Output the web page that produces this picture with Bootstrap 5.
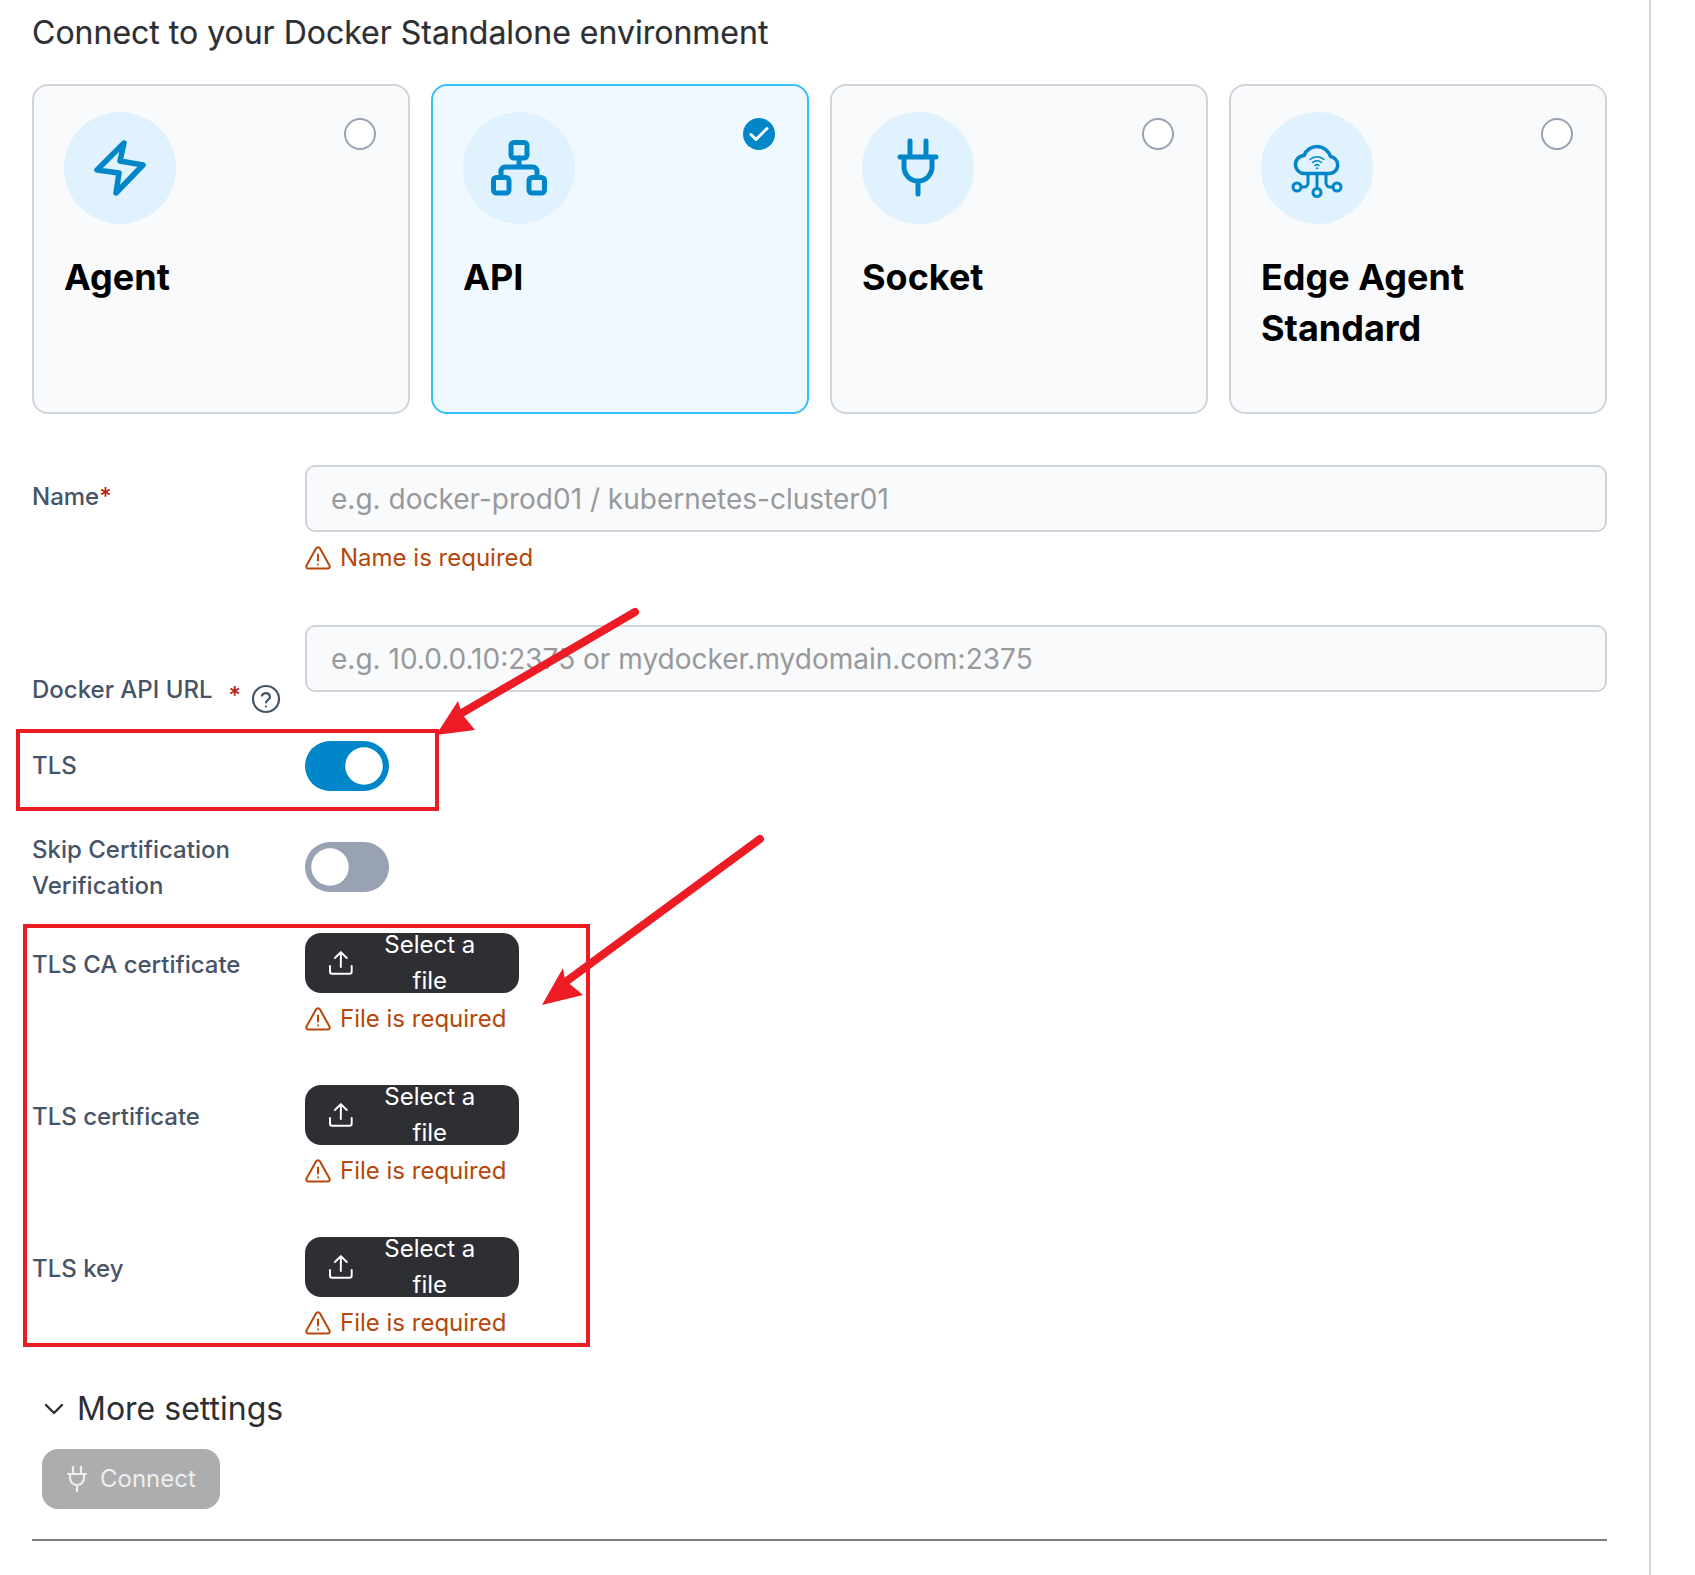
<!DOCTYPE html>
<html lang="en">
<head>
<meta charset="utf-8">
<title>Connect</title>
<link href="https://cdn.jsdelivr.net/npm/bootstrap@5.3.0/dist/css/bootstrap.min.css" rel="stylesheet">
<style>
html,body{height:1575px;overflow:hidden;background:#fff}
body{font-family:Inter,"Liberation Sans",sans-serif;font-size:24px;line-height:36px;color:#344054}
.sheet{position:relative;width:1651px;height:1575px;padding:12px 42px 0 32px;border-right:2px solid #d0d5dd}
.page-title{font-size:32px;line-height:42px;font-weight:400;color:#2d2f33;margin:0 0 30px;-webkit-text-stroke:.2px #2d2f33}
.type-row{gap:21px;margin-bottom:51px}
.type-box{flex:1 1 0;height:330px;position:relative;padding:26px 30px;background:#f9fafb;border:2px solid #d0d5dd;border-radius:16px}
.type-box.picked{background:#f0f9ff;border-color:#36bffa}
.type-disc{width:112px;height:112px;background:#e0f2fe;border-radius:50%;margin-bottom:28px}
.type-disc svg{display:block}
.type-name{font-size:36px;line-height:51px;font-weight:700;color:#000}
.type-radio{position:absolute;top:32px;right:32px;width:32px;height:32px;border-radius:50%;background:#fff;border:2px solid #98a2b3}
.type-radio.on{background:#0086c9;border:0}
.type-radio svg{display:block}
.line{display:flex}
.lab{width:273px;flex:none;color:#475467;font-weight:500;padding-top:14px;padding-right:24px}
.lab-split{display:flex;align-items:center}
.lab-split>span:first-child{flex:1 1 auto}
.req{color:#b42318}
.lab-split .req{margin:0 10px 0 0;line-height:1;position:relative;top:6px;font-size:24px}
.help{width:30px;height:30px;flex:none;margin-top:18px;margin-right:0}
.fld{flex:1 1 auto;min-width:0}
.fld .form-control{height:67px;background:#f9fafb;border:2px solid #d0d5dd;border-radius:10px;font-size:28px;padding:0 24px;color:#344054}
.fld .form-control::placeholder{color:#98999b}
.err{display:flex;align-items:center;gap:9px;color:#b54708;margin-top:8px;height:36px;font-size:24px;font-weight:400}
.err svg{flex:none}
.fld .form-switch{padding:0;margin:0;min-height:0;height:50px;display:block}
.fld .form-switch .form-check-input{width:84px;height:50px;margin:0;float:none;display:block;border:0;border-radius:25px;background-color:#98a2b3;background-image:url("data:image/svg+xml,%3csvg xmlns='http://www.w3.org/2000/svg' viewBox='-4 -4 8 8'%3e%3ccircle r='3' fill='%23fff'/%3e%3c/svg%3e");box-shadow:none}
.fld .form-switch .form-check-input:checked{background-color:#0086c9}
.btn.pick{display:inline-flex;align-items:center;gap:12px;height:60px;width:214px;padding:0 24px;border-radius:16px;background:#2d2f33;border:0;color:#fff;font-size:24px;line-height:36px}
.btn.go{display:inline-flex;align-items:center;gap:12px;height:60px;width:178px;padding:0 24px;border-radius:16px;background:#acadae;border:0;color:#eeeeee;font-size:24px;opacity:1}
.more{display:flex;align-items:center;font-size:32px;line-height:42px;color:#2d2f33;padding-left:12px;gap:13px}
.rule{margin:30px 0 0;border:0;border-top:2px solid #7c7c7c;opacity:1}
.marks{position:absolute;left:0;top:0;pointer-events:none}
</style>
</head>
<body>
<div class="sheet">
  <h1 class="page-title">Connect to your Docker Standalone environment</h1>

  <div class="d-flex type-row">
    <div class="type-box">
      <div class="type-disc"><svg width="112" height="112" viewBox="0 0 112 112" fill="none" stroke="#0086c9" stroke-width="5.5" stroke-linejoin="round" stroke-linecap="round"><path d="M60 31 33 58l22 3-3 20 27-28-23-4z"/></svg></div>
      <div class="type-name">Agent</div>
      <span class="type-radio"></span>
    </div>
    <div class="type-box picked">
      <div class="type-disc"><svg width="112" height="112" viewBox="0 0 112 112" fill="none" stroke="#0086c9" stroke-width="5" stroke-linejoin="round" stroke-linecap="round"><rect x="48" y="30.5" width="16" height="15.500" rx="3"/><rect x="30.500" y="65.500" width="15.500" height="15.500" rx="3"/><rect x="66" y="65.500" width="15.500" height="15.500" rx="3"/><path d="M56 46v9M38 65v-6a4 4 0 0 1 4-4h28a4 4 0 0 1 4 4v6"/></svg></div>
      <div class="type-name">API</div>
      <span class="type-radio on"><svg width="32" height="32" viewBox="0 0 32 32" fill="none" stroke="#fff" stroke-width="3" stroke-linecap="round" stroke-linejoin="round"><path d="m8 16.500 5 5 11-11"/></svg></span>
    </div>
    <div class="type-box">
      <div class="type-disc"><svg width="112" height="112" viewBox="0 0 112 112" fill="none" stroke="#0086c9" stroke-width="5" stroke-linejoin="round" stroke-linecap="round"><path d="M48 29v15M64 29v15M38 45h36M42 46v9a14 14 0 0 0 28 0v-9M56 69v13"/></svg></div>
      <div class="type-name">Socket</div>
      <span class="type-radio"></span>
    </div>
    <div class="type-box">
      <div class="type-disc"><svg width="112" height="112" viewBox="0 0 112 112" fill="none" stroke="#0086c9" stroke-width="3.500" stroke-linejoin="round" stroke-linecap="round"><path d="M44 61.500h24a8.500 8.500 0 0 0 1.500-16.900A14 14 0 0 0 43 43.500a9 9 0 0 0 1 18z"/><path stroke-width="3" d="M56 62v14.500M47 62v9a4 4 0 0 1-4 4h-3M65 62v9a4 4 0 0 0 4 4h3"/><circle stroke-width="3" cx="56" cy="80.500" r="4"/><circle stroke-width="3" cx="36" cy="75" r="4"/><circle stroke-width="3" cx="76" cy="75" r="4"/><path stroke-width="1.500" d="M49 47.500a10 10 0 0 1 14 0M51.500 50.500a6.500 6.500 0 0 1 9 0M54 53.500a3 3 0 0 1 4 0"/><circle cx="56" cy="56.300" r=".7" stroke-width="1"/></svg></div>
      <div class="type-name">Edge Agent Standard</div>
      <span class="type-radio"></span>
    </div>
  </div>

  <form>
    <div class="line name-line">
      <label class="lab">Name<span class="req">*</span></label>
      <div class="fld">
        <input class="form-control" placeholder="e.g. docker-prod01 / kubernetes-cluster01">
        <div class="err"><svg width="26" height="24" viewBox="0 0 26 24" fill="none" stroke="#b54708" stroke-width="2" stroke-linejoin="round" stroke-linecap="round"><path d="M11 2.500 1.500 19.500a2 2 0 0 0 1.700 3h19.600a2 2 0 0 0 1.700-3L15 2.500a2.300 2.300 0 0 0-4 0zM13 8.500v6M13 18.500h.01"/></svg>Name is required</div>
      </div>
    </div>
    <div class="line url-line">
      <label class="lab lab-split"><span>Docker API URL</span><span class="req">*</span><svg class="help" viewBox="0 0 30 30" fill="none" stroke="#475467" stroke-width="2.200" stroke-linecap="round" stroke-linejoin="round"><circle cx="15" cy="15" r="13"/><path d="M11 11.500a4.200 4.200 0 0 1 8 1.400c0 2.800-4 3.600-4 5.600M15 22.500h.01"/></svg></label>
      <div class="fld"><input class="form-control" placeholder="e.g. 10.0.0.10:2375 or mydocker.mydomain.com:2375"></div>
    </div>
    <div class="line tls-line">
      <label class="lab">TLS</label>
      <div class="fld"><div class="form-check form-switch"><input class="form-check-input" type="checkbox" role="switch" checked></div></div>
    </div>
    <div class="line skip-line">
      <label class="lab">Skip Certification Verification</label>
      <div class="fld"><div class="form-check form-switch"><input class="form-check-input" type="checkbox" role="switch"></div></div>
    </div>
    <div class="line file-line">
      <label class="lab">TLS CA certificate</label>
      <div class="fld">
        <button type="button" class="btn pick"><svg width="24" height="24" viewBox="0 0 24 24" fill="none" stroke="#fff" stroke-width="2" stroke-linecap="round" stroke-linejoin="round"><path d="M1 15v6a2 2 0 0 0 2 2h18a2 2 0 0 0 2-2v-6M12 16V1M6 7l6-6 6 6"/></svg>Select a file</button>
        <div class="err"><svg width="26" height="24" viewBox="0 0 26 24" fill="none" stroke="#b54708" stroke-width="2" stroke-linejoin="round" stroke-linecap="round"><path d="M11 2.500 1.500 19.500a2 2 0 0 0 1.700 3h19.600a2 2 0 0 0 1.700-3L15 2.500a2.300 2.300 0 0 0-4 0zM13 8.500v6M13 18.500h.01"/></svg>File is required</div>
      </div>
    </div>
    <div class="line file-line">
      <label class="lab">TLS certificate</label>
      <div class="fld">
        <button type="button" class="btn pick"><svg width="24" height="24" viewBox="0 0 24 24" fill="none" stroke="#fff" stroke-width="2" stroke-linecap="round" stroke-linejoin="round"><path d="M1 15v6a2 2 0 0 0 2 2h18a2 2 0 0 0 2-2v-6M12 16V1M6 7l6-6 6 6"/></svg>Select a file</button>
        <div class="err"><svg width="26" height="24" viewBox="0 0 26 24" fill="none" stroke="#b54708" stroke-width="2" stroke-linejoin="round" stroke-linecap="round"><path d="M11 2.500 1.500 19.500a2 2 0 0 0 1.700 3h19.600a2 2 0 0 0 1.700-3L15 2.500a2.300 2.300 0 0 0-4 0zM13 8.500v6M13 18.500h.01"/></svg>File is required</div>
      </div>
    </div>
    <div class="line file-line">
      <label class="lab">TLS key</label>
      <div class="fld">
        <button type="button" class="btn pick"><svg width="24" height="24" viewBox="0 0 24 24" fill="none" stroke="#fff" stroke-width="2" stroke-linecap="round" stroke-linejoin="round"><path d="M1 15v6a2 2 0 0 0 2 2h18a2 2 0 0 0 2-2v-6M12 16V1M6 7l6-6 6 6"/></svg>Select a file</button>
        <div class="err"><svg width="26" height="24" viewBox="0 0 26 24" fill="none" stroke="#b54708" stroke-width="2" stroke-linejoin="round" stroke-linecap="round"><path d="M11 2.500 1.500 19.500a2 2 0 0 0 1.700 3h19.600a2 2 0 0 0 1.700-3L15 2.500a2.300 2.300 0 0 0-4 0zM13 8.500v6M13 18.500h.01"/></svg>File is required</div>
      </div>
    </div>

    <div class="more"><svg width="20" height="12" viewBox="0 0 20 12" fill="none" stroke="#2d2f33" stroke-width="2.400" stroke-linecap="round" stroke-linejoin="round"><path d="m2 2 8 8 8-8"/></svg>More settings</div>
    <div class="go-wrap"><button type="button" class="btn go"><svg width="22" height="26" viewBox="0 0 22 26" fill="none" stroke="#eee" stroke-width="2.200" stroke-linecap="round" stroke-linejoin="round"><path d="M7 1v6M15 1v6M2 8h18M4 8v4a7 7 0 0 0 14 0V8M11 19v6"/></svg>Connect</button></div>
    <hr class="rule">
  </form>

  <svg class="marks" width="1695" height="1575" viewBox="0 0 1695 1575" fill="none">
    <rect x="18" y="731" width="419" height="78" stroke="#ed1c24" stroke-width="4"/>
    <rect x="25" y="926" width="563" height="419" stroke="#ed1c24" stroke-width="4"/>
    <path d="M635 612 455 717" stroke="#ed1c24" stroke-width="8" stroke-linecap="round"/>
    <path d="M436 735 458 701 462 714 475 730z" fill="#ed1c24"/>
    <path d="M760 839 560 986" stroke="#ed1c24" stroke-width="8" stroke-linecap="round"/>
    <path d="M542 1005 563 968 565 980 583 995z" fill="#ed1c24"/>
  </svg>
</div>
<style>
.name-line{height:160px}
.url-line{height:116px}
.tls-line{height:91px}
.skip-line{height:101px;}
.tls-line .lab{padding-top:7px}
.skip-line .lab{padding-top:0}
.skip-line .fld{padding-top:10px}
.file-line{height:152px}
.more{margin-top:-1px}
.go-wrap{padding-left:10px;margin-top:19px}
</style>
<script src="https://cdn.jsdelivr.net/npm/bootstrap@5.3.0/dist/js/bootstrap.bundle.min.js"></script>
</body>
</html>
